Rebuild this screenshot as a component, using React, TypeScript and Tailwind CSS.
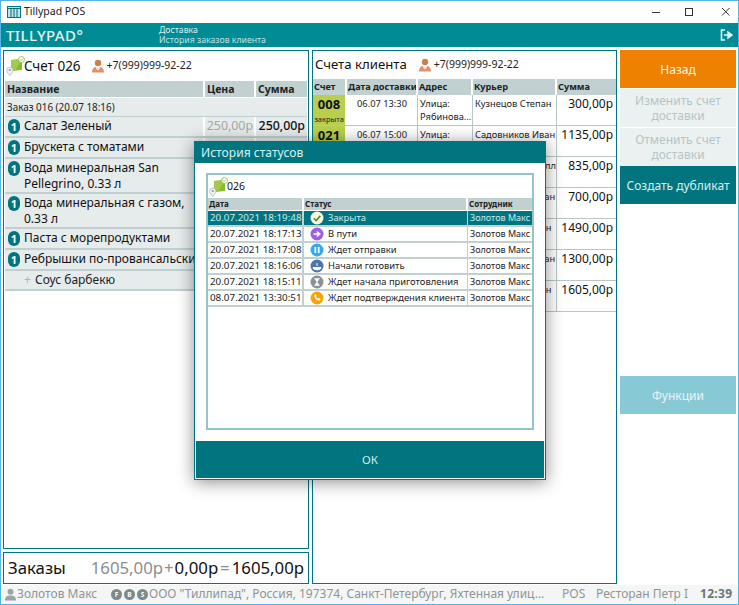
const F = "font-['Noto_Sans','Open_Sans',sans-serif]";

function BillIcon({ className = "" }: { className?: string }) {
  return (
    <svg viewBox="0 0 19 20" width="19" height="20" className={className}>
      <path d="M5 4 L16 3 L16 14 L5 15 Z" fill="#8ab934" />
      <path d="M5 4 L16 3 L9 15 L5 15 Z" fill="#a2cb4a" />
      <circle cx="15.500" cy="3.500" r="3" fill="#fff" stroke="#8ab934" strokeWidth="0.8" />
      <path d="M14 3.500l1.100 1.100 1.900-2" stroke="#8ab934" strokeWidth="0.9" fill="none" />
      <path d="M3.800 11 a3.200 3.200 0 0 1 3.200 3.200 c0 1.600-2 4-3.200 5.300 c-1.200-1.300-3.200-3.700-3.200-5.300 a3.200 3.200 0 0 1 3.200-3.200z" fill="#f0f2f2" stroke="#9aa5a5" strokeWidth="0.6" />
      <circle cx="3.800" cy="14" r="1.100" fill="#8b9696" />
    </svg>
  );
}

function PersonIcon() {
  return (
    <svg viewBox="0 0 14 14" width="14" height="14">
      <circle cx="7" cy="4" r="3.200" fill="#c9814f" />
      <path d="M1 13.500 c0-4 2.500-5.200 3.600-5.400 L7 10 l2.400-1.900 c1.100.2 3.600 1.400 3.600 5.400z" fill="#e0916a" />
      <path d="M5.200 8l1.800 2 1.800-2 0.2 1.500-2 2-2-2z" fill="#f5e6dc" />
    </svg>
  );
}

function Badge() {
  return (
    <span className="block w-[12px] h-[15px] shrink-0 rounded-full bg-[#00757f] text-white font-bold text-[11px] leading-[15px] text-center">1</span>
  );
}

function LeftRow({ name, price, sum }: { name: string; price?: string; sum?: string }) {
  return (
    <div className="flex min-h-[21px] box-border bg-[#e6ebeb] border-b-2 border-[#c0d0d0] text-[12px] leading-[15.5px] text-[#111]">
      <div className="w-[200px] flex gap-[4px] pl-[3px] py-[1px] border-r-2 border-white overflow-hidden whitespace-nowrap">
        <div className="pt-[1px]"><Badge /></div>
        <div className="whitespace-pre">{name}</div>
      </div>
      <div className="w-[51px] text-right text-[#a3a8a8] text-[12.400px] pr-[1px] py-[1px] border-r-2 border-white whitespace-nowrap">{price}</div>
      <div className="flex-1 text-right text-[12.400px] pr-[2px] py-[1px] whitespace-nowrap font-medium">{sum}</div>
    </div>
  );
}

function LeftPanel() {
  return (
    <div className="flex-1 min-h-0 border border-[#00757f] flex flex-col px-[1px] bg-white">
      <div className="h-[30px] flex items-center pl-[1px] shrink-0">
        <BillIcon />
        <span className="text-[13.500px] -ml-[1px] text-[#111]">Счет 026</span>
        <span className="ml-[10px] flex items-center"><PersonIcon /><span className="text-[10.500px] text-[#222] ml-[2px]">+7(999)999-92-22</span></span>
      </div>
      <div className="flex bg-[#c1d1d2] text-[10.500px] font-bold leading-[16px] text-[#222] border-b border-white">
        <div className="w-[200px] pl-[2px] border-r-2 border-white">Название</div>
        <div className="w-[51px] pl-[2px] border-r-2 border-white">Цена</div>
        <div className="flex-1 pl-[2px]">Сумма</div>
      </div>
      <div className="h-[19px] bg-[#e6ebeb] border-b border-[#c0d0d0] text-[9.900px] leading-[18px] pl-[2px] text-[#222]">Заказ 016 (20.07 18:16)</div>
      <LeftRow name="Салат Зеленый" price="250,00р" sum="250,00р" />
      <LeftRow name="Брускета с томатами" />
      <LeftRow name={"Вода минеральная San\nPellegrino, 0.33 л"} />
      <LeftRow name={"Вода минеральная с газом,\n0.33 л"} />
      <LeftRow name="Паста с морепродуктами" />
      <LeftRow name="Ребрышки по-провансальски" />
      <div className="h-[20px] bg-[#e6ebeb] border-b-2 border-[#c0d0d0] text-[12px] leading-[18px] pl-[19px] text-[#222]"><span className="text-[#a9b4b4] mr-[1px]">+</span> Соус барбекю</div>
    </div>
  );
}

const BILLS = [
  { n: "008", st: "закрыта", d: "06.07 13:30", a: "Улица:\nРябинова...", c: "Кузнецов Степан", s: "300,00р" },
  { n: "021", st: "", d: "06.07 15:00", a: "Улица:", c: "Садовников Иван", s: "1135,00р" },
  { n: "", st: "", d: "", a: "", c: "Кириллов Кирилл", s: "835,00р" },
  { n: "", st: "", d: "", a: "", c: "Садовников Иван", s: "700,00р" },
  { n: "", st: "", d: "", a: "", c: "Кузнецов Степан", s: "1490,00р" },
  { n: "", st: "", d: "", a: "", c: "Садовников Иван", s: "1300,00р" },
  { n: "", st: "", d: "", a: "", c: "Кузнецов Степан", s: "1605,00р" },
];

function MiddlePanel() {
  return (
    <div className="w-[305px] h-full border border-[#00757f] flex flex-col bg-white">
      <div className="h-[28px] flex items-center pl-[2px] shrink-0">
        <span className="text-[13.200px] text-[#111]">Счета клиента</span>
        <span className="ml-[11px] flex items-center"><PersonIcon /><span className="text-[10.500px] text-[#222] ml-[2px]">+7(999)999-92-22</span></span>
      </div>
      <div className="flex bg-[#c1d1d2] text-[9.200px] font-bold leading-[16px] text-[#222] whitespace-nowrap">
        <div className="w-[34px] pl-[1px] border-r-2 border-white">Счет</div>
        <div className="w-[71px] pl-[1px] border-r-2 border-white overflow-hidden">Дата доставки</div>
        <div className="w-[55px] pl-[1px] border-r-2 border-white">Адрес</div>
        <div className="w-[84px] pl-[1px] border-r-2 border-white">Курьер</div>
        <div className="flex-1 pl-[1px]">Сумма</div>
      </div>
      {BILLS.map((b, i) => (
        <div key={i} className="h-[31px] flex border-b border-[#b8c6c6] text-[9.300px] leading-[13px] text-[#222]">
          <div className="w-[34px] bg-[#b8cf4d] border-r-2 border-white flex flex-col items-center">
            <span className="text-[13px] font-bold leading-[18px] text-[#111]">{b.n}</span>
            <span className="text-[7.500px] leading-[12px]">{b.st}</span>
          </div>
          <div className="w-[71px] pt-[2px] text-center border-r border-[#b8c6c6] whitespace-nowrap">{b.d}</div>
          <div className="w-[55px] pt-[2px] pl-[2px] whitespace-pre-line border-r border-[#b8c6c6] overflow-hidden">{b.a}</div>
          <div className="w-[84px] pt-[2px] pl-[2px] whitespace-nowrap border-r border-[#b8c6c6] overflow-hidden">{b.c}</div>
          <div className="flex-1 text-right pr-[3px] pt-[2px] text-[12px] leading-[14px] whitespace-nowrap text-[#111]">{b.s}</div>
        </div>
      ))}
    </div>
  );
}

function SideButton({ label, className }: { label: string; className: string }) {
  return (
    <div className={`h-[38px] flex items-center justify-center text-center text-[12px] leading-[15px] ${className}`}>{label}</div>
  );
}

function RightColumn() {
  return (
    <div className="w-[116px] h-full flex flex-col">
      <SideButton label="Назад" className="bg-[#ee8100] text-[#fff5e0] mb-[1px]" />
      <SideButton label="Изменить счет доставки" className="bg-[#ebf1f1] text-[#b4c5c6] mb-[1px]" />
      <SideButton label="Отменить счет доставки" className="bg-[#ebf1f1] text-[#b4c5c6]" />
      <SideButton label="Создать дубликат" className="bg-[#00757f] text-[#d8f0f2]" />
      <div className="flex-1" />
      <SideButton label="Функции" className="bg-[#88c9d6] text-[#e8f5f7] mb-[170px]" />
    </div>
  );
}

function StatusIcon({ bg, kind }: { bg: string; kind: string }) {
  return (
    <svg viewBox="0 0 14 14" width="14" height="14" className="shrink-0">
      <circle cx="7" cy="7" r="6.500" fill={bg} />
      {kind === "check" && <path d="M3.800 7.200l2.300 2.300 4.200-4.600" stroke="#5d8a1c" strokeWidth="1.600" fill="none" />}
      {kind === "arrow" && <path d="M3.500 7h5M6.800 4.500L9.800 7l-3 2.500" stroke="#fff" strokeWidth="1.400" fill="none" />}
      {kind === "pause" && <path d="M5.300 4v6M8.700 4v6" stroke="#fff" strokeWidth="1.700" />}
      {kind === "dish" && <path d="M3 8.500h8c0 1.500-1.500 2.300-4 2.300S3 10 3 8.500zM7 4v3" stroke="#fff" strokeWidth="1" fill="#fff" />}
      {kind === "sand" && <path d="M4.500 3.500h5L7 7l2.500 3.500h-5L7 7z" fill="#fff" stroke="#fff" strokeWidth="0.5" />}
      {kind === "phone" && <path d="M4.500 4c-.6 3 2.400 6 5.500 5.500l.6-1.600-1.800-1-.9.8C7 7.200 6.500 6.700 6 5.800l.8-.9-1-1.700z" fill="#fff" />}
    </svg>
  );
}

const HISTORY = [
  { d: "20.07.2021 18:19:48", s: "Закрыта", bg: "#f4f7e0", k: "check" },
  { d: "20.07.2021 18:17:13", s: "В пути", bg: "#a05fe0", k: "arrow" },
  { d: "20.07.2021 18:17:08", s: "Ждет отправки", bg: "#35a9ee", k: "pause" },
  { d: "20.07.2021 18:16:06", s: "Начали готовить", bg: "#4f74ae", k: "dish" },
  { d: "20.07.2021 18:15:11", s: "Ждет начала приготовления", bg: "#8d9196", k: "sand" },
  { d: "08.07.2021 13:30:51", s: "Ждет подтверждения клиента", bg: "#f5a50a", k: "phone" },
];

function Modal() {
  return (
    <div className="absolute left-[193px] top-[140px] w-[352px] h-[339px] bg-white border border-[#00757f] shadow-[0_2px_16px_rgba(0,0,0,0.45)] flex flex-col">
      <div className="h-[21px] bg-[#00757f] text-[#d8f0f2] text-[12.100px] leading-[22px] pl-[6px] shrink-0">История статусов</div>
      <div className="flex-1 min-h-0 px-[11px] pt-[10px] pb-[11px] flex">
        <div className="flex-1 border-2 border-[#93c4c9] flex flex-col">
          <div className="h-[23px] flex items-center pl-[1px] shrink-0">
            <BillIcon />
            <span className="text-[10.500px] -ml-[1px] text-[#111]">026</span>
          </div>
          <div className="flex bg-[#c1d1d2] text-[8px] font-bold leading-[12px] text-[#222] border-b border-white">
            <div className="w-[96px] pl-[1px] border-r-2 border-white">Дата</div>
            <div className="w-[164px] pl-[1px] border-r-2 border-white">Статус</div>
            <div className="flex-1 pl-[1px]">Сотрудник</div>
          </div>
          {HISTORY.map((h, i) => (
            <div key={i} className={`h-[16px] flex border-b-2 text-[9.400px] leading-[14px] whitespace-nowrap ${i === 0 ? "bg-[#00757f] text-[#cfe8ea] border-[#c1d1d2]" : "bg-white text-[#222] border-[#c1d1d2]"}`}>
              <div className="w-[96px] pl-[2px] text-[9.800px] border-r-2 border-[#c1d1d2]">{h.d}</div>
              <div className="w-[164px] pl-[6px] flex gap-[4px] items-center border-r border-[#c1d1d2]">
                <StatusIcon bg={h.bg} kind={h.k} />
                <span>{h.s}</span>
              </div>
              <div className="flex-1 pl-[2px] text-[9px] overflow-hidden">Золотов Макс</div>
            </div>
          ))}
        </div>
      </div>
      <div className="h-[37px] mx-[1px] mb-[1px] bg-[#00757f] text-[#cfe8ea] text-[11.500px] flex items-center justify-center shrink-0">ОК</div>
    </div>
  );
}

export default function App() {
  return (
    <div className={`relative w-[739px] h-[605px] overflow-hidden bg-white border border-[#56b4e6] flex flex-col ${F}`}>
      <div className="h-[22px] shrink-0 flex items-center bg-white">
        <svg viewBox="0 0 14 12" width="14" height="12" className="ml-[6px]">
          <rect x="0.500" y="0.500" width="13" height="11" fill="#bfe2e6" stroke="#00757f" />
          <path d="M0.500 2.500h13M4 3v8M7 3v8M10 3v8" stroke="#00757f" />
        </svg>
        <span className="ml-[3px] text-[10.500px] text-[#222]">Tillypad POS</span>
        <svg width="110" height="12" viewBox="0 0 110 12" className="ml-auto">
          <path d="M24 6.500h8" stroke="#333" strokeWidth="1" />
          <rect x="57.500" y="2.500" width="7" height="7" fill="none" stroke="#333" />
          <path d="M94 2l7.500 7.500M101.500 2l-7.500 7.500" stroke="#333" strokeWidth="1" />
        </svg>
      </div>
      <div className="h-[24px] shrink-0 bg-[#008b95] flex items-center text-[#d8f0f2]">
        <span className="ml-[5px] w-[153px] text-[#e4f4f6] text-[15px] font-medium tracking-[0.4px] leading-[24px]">TILLYPAD°</span>
        <div className="text-[8.700px] leading-[10px]">
          <div>Доставка</div>
          <div className="text-[#bfe3e6]">История заказов клиента</div>
        </div>
        <svg viewBox="0 0 14 12" width="14" height="12" className="ml-auto mr-[4px]">
          <path d="M5 1H1.500v10H5" stroke="#e8f5f7" strokeWidth="1.600" fill="none" />
          <path d="M4 6h6M8 3l4 3-4 3z" stroke="#e8f5f7" strokeWidth="1.400" fill="#e8f5f7" />
        </svg>
      </div>
      <div className="flex-1 min-h-0 flex gap-[3px] pl-[2px] pt-[3px] pb-[1px]">
        <div className="w-[306px] flex flex-col gap-[3px] h-full">
          <LeftPanel />
          <div className="h-[32px] shrink-0 border border-[#00757f] flex items-center px-[4px] text-[16.800px] text-[#111] whitespace-nowrap">
            <span>Заказы</span>
            <span className="ml-auto text-[#8a8e8e]">1605,00р</span>
            <span className="text-[#8a8e8e] mx-[1px]">+</span>
            <span>0,00р</span>
            <span className="text-[#8a8e8e] mx-[2px]">=</span>
            <span>1605,00р</span>
          </div>
        </div>
        <MiddlePanel />
        <RightColumn />
      </div>
      <div className="h-[19px] pb-[1px] shrink-0 bg-[#f4f5f5] flex items-center pl-[3px] pr-[2px] text-[12px] text-[#8e9698] whitespace-nowrap">
        <svg viewBox="0 0 14 14" width="13" height="13">
          <circle cx="7" cy="4" r="3.200" fill="#9aa5a8" />
          <path d="M1 13.500c0-4 2.500-5.400 6-5.400s6 1.400 6 5.400z" fill="#9aa5a8" />
        </svg>
        <span className="w-[94px]">Золотов Макс</span>
        <span className="flex gap-[2px] text-[6.500px] font-bold text-white mr-[1px]">
          <span className="w-[11px] h-[11px] rounded-full bg-[#7d8a8c] text-center leading-[11px]">F</span>
          <span className="w-[11px] h-[11px] rounded-full bg-[#7d8a8c] text-center leading-[11px]">B</span>
          <span className="w-[11px] h-[11px] rounded-full bg-[#7d8a8c] text-center leading-[11px]">S</span>
        </span>
        <span className="w-[413px] overflow-hidden">ООО "Тиллипад", Россия, 197374, Санкт-Петербург, Яхтенная улиц...</span>
        <span className="w-[34px]">POS</span>
        <span className="w-[104px]">Ресторан Петр I</span>
        <span className="font-bold text-[#6d7578] tracking-[0.3px]">12:39</span>
      </div>
      <Modal />
    </div>
  );
}
